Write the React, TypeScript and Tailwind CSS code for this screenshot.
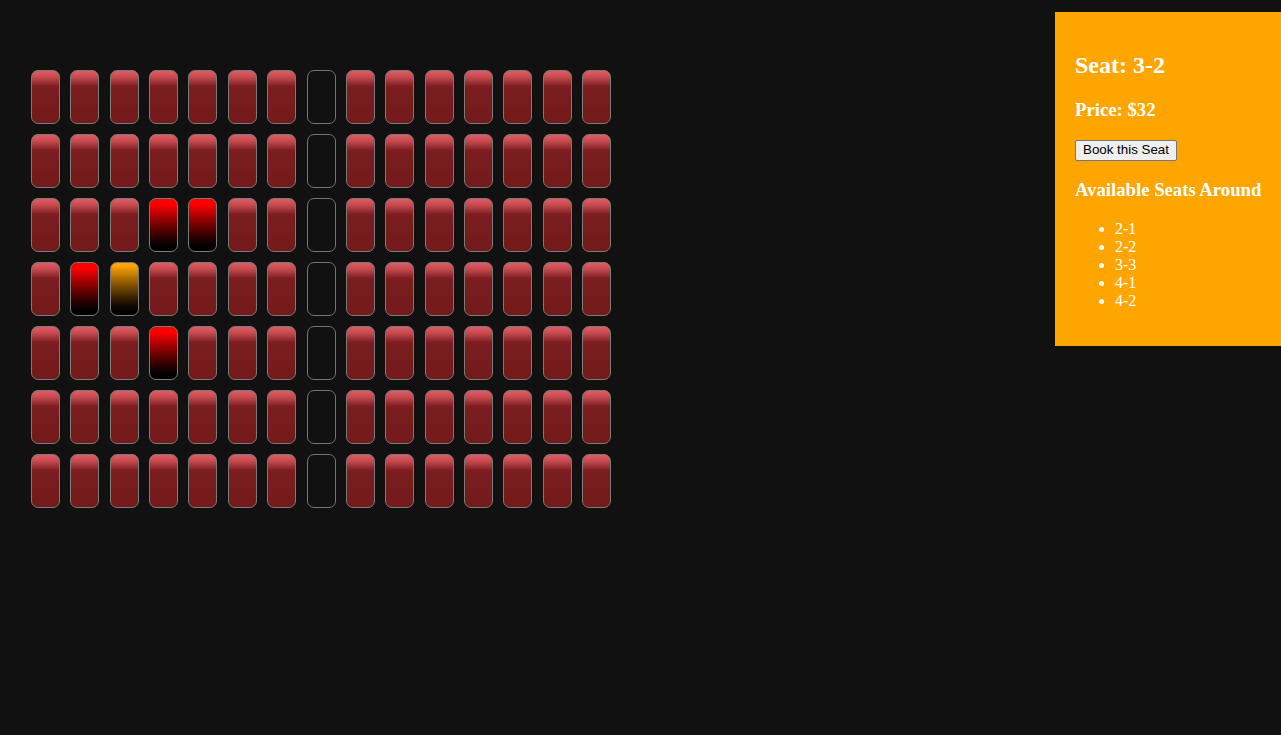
import React from "react";

const ROWS = 7;
const COLS = 15;
const AISLE = 7;

// row/col (0-based) -> state
const selected: Record<string, "taken" | "current"> = {
  "2-3": "taken",
  "2-4": "taken",
  "3-1": "taken",
  "3-2": "current",
  "4-3": "taken",
};

function Seat({ row, col }: { row: number; col: number }) {
  if (col === AISLE) {
    return <div className="w-[29px] h-[54px] rounded-[7px] border border-[#757575]" />;
  }
  const state = selected[`${row}-${col}`];
  let fill =
    "bg-[linear-gradient(to_bottom,#e25c62_0%,#c44a4f_12%,#7b1d1f_30%,#731a1b_100%)]";
  if (state === "taken") fill = "bg-gradient-to-b from-[#ff0000] from-10% to-black";
  if (state === "current") fill = "bg-gradient-to-b from-[#ffa500] from-5% to-black";
  return (
    <div
      className={`w-[29px] h-[54px] rounded-[7px] border border-[#7a7a7a] ${fill}`}
    />
  );
}

export default function App() {
  const nearby = ["2-1", "2-2", "3-3", "4-1", "4-2"];
  return (
    <div className="min-h-screen bg-[#111111] flex justify-between font-['Liberation_Serif',serif]">
      <div className="pt-[70px] pl-[31px]">
        <div className="grid grid-cols-[repeat(15,29px)] gap-x-[10.36px] gap-y-[10px]">
          {Array.from({ length: ROWS }).map((_, r) =>
            Array.from({ length: COLS }).map((_, c) => (
              <Seat key={`${r}-${c}`} row={r} col={c} />
            ))
          )}
        </div>
      </div>

      <div className="w-[226px] self-start mt-[12px] bg-[#ffa500] p-5 text-white">
        <h2 className="text-[24px] font-bold leading-[1.15] my-[19.92px]">Seat: 3-2</h2>
        <h3 className="text-[18.72px] font-bold leading-[1.15] my-[18.72px]">Price: $32</h3>
        <div className="flex">
          <button
            type="button"
            className="h-[21px] bg-[#efefef] text-black border border-[#767676] rounded-[2px] px-[7px] text-[13.33px] leading-[1.15] font-['Liberation_Sans',Arial,sans-serif]"
          >
            Book this Seat
          </button>
        </div>
        <h3 className="text-[18.72px] font-bold leading-[1.15] my-[18.72px] whitespace-nowrap">
          Available Seats Around
        </h3>
        <ul className="list-disc pl-10 my-4 text-[16px] leading-[18px]">
          {nearby.map((s) => (
            <li key={s}>{s}</li>
          ))}
        </ul>
      </div>
    </div>
  );
}
